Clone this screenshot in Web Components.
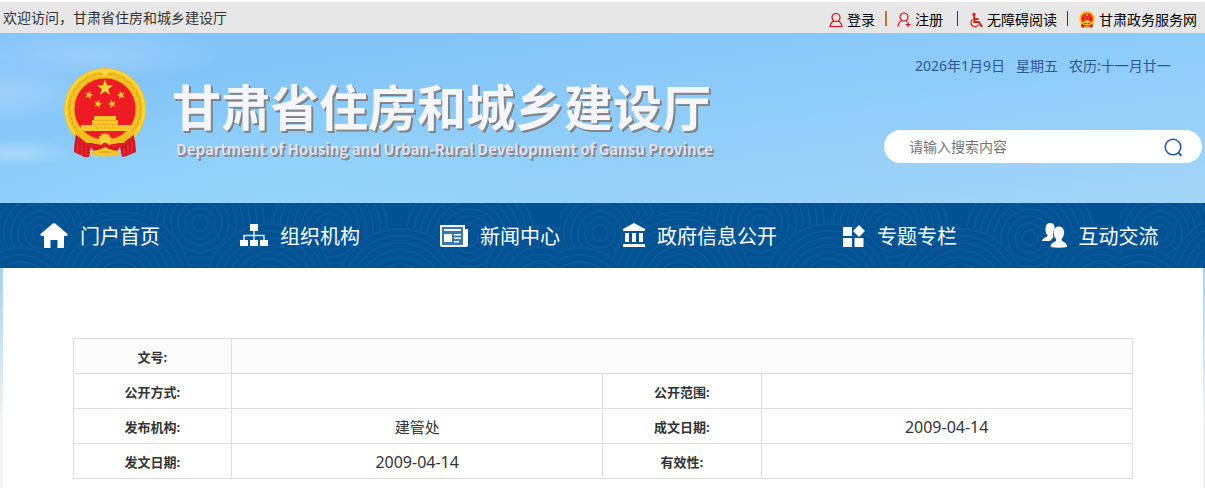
<!DOCTYPE html>
<html lang="zh-CN">
<head>
<meta charset="utf-8">
<meta name="viewport" content="width=device-width, initial-scale=1">
<title>甘肃省住房和城乡建设厅</title>
<style>
html { background: #f4f4f4; }
body {
  margin: 0;
  font-family: "Noto Sans", "Noto Sans CJK SC", sans-serif;
  font-size: 14px;
  line-height: 20px;
  color: #333;
}
</style>
</head>
<body>
<gs-page>
  <gs-topbar slot="top"></gs-topbar>
  <gs-banner slot="banner"></gs-banner>
  <gs-nav slot="nav">
    <gs-nav-item icon="home">门户首页</gs-nav-item>
    <gs-nav-item icon="org">组织机构</gs-nav-item>
    <gs-nav-item icon="news">新闻中心</gs-nav-item>
    <gs-nav-item icon="gov">政府信息公开</gs-nav-item>
    <gs-nav-item icon="topic">专题专栏</gs-nav-item>
    <gs-nav-item icon="people">互动交流</gs-nav-item>
  </gs-nav>
  <gs-doc-info></gs-doc-info>
</gs-page>

<script>
class Base extends HTMLElement {
  constructor() {
    super();
    this.attachShadow({ mode: 'open' });
  }
  connectedCallback() {
    this.shadowRoot.innerHTML = this.render();
  }
}

customElements.define('gs-page', class extends Base {
  render() {
    return `<style>
      :host { display: block; background: linear-gradient(#8ac9f8 0, #9dd2f8 200px, #a5d5f7 280px, #cfe6f6 350px, #f4f4f4 420px); border-top: 2px solid #fff; }
      main { max-width: 1200px; margin: 0 auto; background: #fff; padding: 70px 70px 9px; box-sizing: border-box; }
    </style>
    <slot name="top"></slot><slot name="banner"></slot><slot name="nav"></slot>
    <main><slot></slot></main>`;
  }
});

customElements.define('gs-emblem', class extends Base {
  render() {
    const star = '0,-10 2.4,-3.2 9.5,-3.1 3.8,1.2 5.9,8.1 0,4 -5.9,8.1 -3.8,1.2 -9.5,-3.1 -2.4,-3.2';
    const grains = (r, n) => Array.from({ length: n }, (_, i) => {
      const a = (128 + i * 284 / (n - 1)) * Math.PI / 180;
      const x = 41 + r * Math.cos(a), y = 41 + r * Math.sin(a);
      const t = a * 180 / Math.PI + (i % 2 ? 65 : 115);
      return `<ellipse cx="${x.toFixed(1)}" cy="${y.toFixed(1)}" rx="2.6" ry=".6" transform="rotate(${t.toFixed(0)} ${x.toFixed(1)} ${y.toFixed(1)})"/>`;
    }).join('');
    return `<style>
      :host { display: block; }
      svg { display: block; width: 100%; height: 100%; }
    </style>
    <svg viewBox="0 0 82 90" aria-hidden="true">
      <circle cx="41" cy="41" r="41" fill="#f5c224"/>
      <circle cx="41" cy="41" r="39" fill="none" stroke="#fbd93c" stroke-width="2"/>
      <g fill="#e0a51f">${grains(35.5, 40)}</g>
      <polygon points="${star}" transform="translate(41 5) scale(.45)" fill="#fde04a"/>
      <circle cx="41" cy="41" r="31" fill="#ed1c24" stroke="#e0a51d" stroke-width="1"/>
      <polygon points="${star}" transform="translate(41 20) scale(.84)" fill="#fdd835"/>
      <g fill="#fdc72e">
        <polygon points="${star}" transform="translate(25 27) scale(.45) rotate(15)"/>
        <polygon points="${star}" transform="translate(57 27) scale(.45) rotate(-15)"/>
        <polygon points="${star}" transform="translate(34 36) scale(.45) rotate(15)"/>
        <polygon points="${star}" transform="translate(48 36) scale(.45) rotate(-15)"/>
      </g>
      <path d="M12 65 Q10 78 10 84 L14 86 L17 87 L20 89 L25 89 L27 79 L33 88 H50 L56 79 L58 89 L63 88 L67 86 L72 84 Q72 74 69 65 L60 75 H22Z" fill="#d3161f"/>
      <path d="M14 74 L14 85 M18 77 L18 87 M22 80 L22 88 M68 74 L68 85 M64 77 L64 87 M60 80 L60 88" stroke="#ee3940" stroke-width="1"/>
      <path d="M30 48 H52 V52 H54 V57 H66 Q67 57 67 60 V63 H16 L17 57 H28 V52 H30Z" fill="#fbc82c"/>
      <path d="M29 52.500 H53 M28 56.500 H54" stroke="#e0a31f" stroke-width=".8"/>
      <path d="M32 60 H50" stroke="#e0a31f" stroke-width="1" stroke-dasharray="2 2"/>
      <path d="M13 61 Q24 72 40 72 Q58 72 69 61 L71 66 Q59 77 41 77 Q23 77 11 66Z" fill="#f5bd22"/>
      <circle cx="41" cy="72" r="6" fill="#fbd43a" stroke="#f0b722" stroke-width="2" stroke-dasharray="2 1.4"/>
      <path d="M12 67 Q24 79 37 77 Q41 72 45 77 Q58 79 70 67 L70 71 Q57 83 41 79 Q25 83 12 71Z" fill="#df1d25"/>
      <path d="M25 83 Q34 83 41 79 Q48 83 57 83 L54 87 Q41 90 28 87Z" fill="#f8c72b"/>
      <path d="M35 84 h12" stroke="#d9981c" stroke-width="1"/>
    </svg>`;
  }
});

customElements.define('gs-topbar', class extends Base {
  render() {
    return `<style>
      :host { display: flex; justify-content: space-between; align-items: center; height: 31px; background: #e7e7e7; padding: 0 8px 0 3px; }
      nav { display: flex; align-items: center; color: #000; padding-top: 4px; }
      a { display: flex; align-items: center; gap: 4px; color: inherit; text-decoration: none; white-space: nowrap; }
      i { width: 1px; height: 15px; background: #3d3158; margin: -3px 11px 0 14px; }
      i.warm { background: #b27a43; margin: -3px 10px 0 10px; width: 2px; }
      i.near { margin-left: 10px; }
      svg { width: 14px; height: 16px; fill: none; stroke: #e60012; stroke-width: 1.2; }
      gs-emblem { width: 16px; height: 17px; }
      p { margin: 0; }
    </style>
    <p>欢迎访问，甘肃省住房和城乡建设厅</p>
    <nav aria-label="用户">
      <a href="#"><svg viewBox="0 0 14 16"><circle cx="7" cy="5.500" r="4"/><path d="M5 9 Q1.500 10.500 1 14.500 H13 Q12.500 10.500 9 9"/></svg><span>登录</span></a>
      <i class="warm"></i>
      <a href="#"><svg viewBox="0 0 14 16"><circle cx="7" cy="5" r="4"/><path d="M5 8.500 Q1.500 10 1 14.500 M9 8.500 L10.500 9.500 M11 10 V15 M8.500 12.500 H13.500"/></svg><span>注册</span></a>
      <i></i>
      <a href="#"><svg viewBox="0 0 14 16"><circle cx="5" cy="2.500" r="1.700" fill="#d9230f" stroke="none"/><path d="M5.200 4 V10 H10 L12 14 L13.500 13.300 M5 7 H9.500" stroke-width="1.900" stroke="#d9230f"/><path d="M3.500 7.500 A4 4 0 1 0 9.500 12.500" stroke="#d9230f"/></svg><span>无障碍阅读</span></a>
      <i class="near"></i>
      <a href="#"><gs-emblem></gs-emblem><span>甘肃政务服务网</span></a>
    </nav>`;
  }
});

customElements.define('gs-banner', class extends Base {
  render() {
    return `<style>
      :host { display: flex; justify-content: space-between; align-items: flex-start; height: 170px; overflow: hidden;
        background:
          radial-gradient(ellipse 90px 30px at 5px 60px, #c0dcf880, transparent),
          radial-gradient(ellipse 130px 26px at 90px 22px, #b8d8f870, transparent),
          radial-gradient(ellipse 60px 14px at 15px 120px, #cfe8fa80, transparent),
          radial-gradient(ellipse 380px 110px at 300px 100%, #97d8f9b0, transparent),
          linear-gradient(172deg, #84c5f9 20%, #8fcdf9 55%, #a4d5f7 100%); }
      .brand { display: flex; align-items: flex-start; padding: 35px 0 0 64px; gap: 26px; }
      gs-emblem { width: 82px; height: 90px; flex: none; }
      hgroup { display: block; padding-top: 4px; white-space: nowrap; }
      h1, p { margin: 0; font-family: "Noto Sans CJK SC", sans-serif; font-weight: 700; }
      h1 { font-size: 49px; line-height: 66px; color: #f5f6fb; text-shadow: 1px 1px #85888c, 2px 2px #7e8082; }
      p { font-size: 15px; line-height: 22px; padding-left: 4px; color: #dfe3f3; text-shadow: 1px 1px #8a8c94, 2px 2px #85878d; }
      .side { display: flex; flex-direction: column; width: 318px; padding: 23px 3px 0 0; }
      time { color: #2f5597; padding-left: 31px; white-space: pre; }
      form { display: flex; align-items: center; height: 33px; background: #fff; border-radius: 17px; margin-top: 54px; padding: 0 19px 0 25px; }
      input { flex: 1; min-width: 0; border: 0; outline: 0; padding: 0; background: none; font: inherit; color: #333; }
      input::placeholder { color: #757575; opacity: 1; }
      button { border: 0; background: none; padding: 0; width: 20px; height: 20px; }
      svg { display: block; width: 20px; height: 20px; fill: none; stroke: #2c5aa0; stroke-width: 1.600; }
    </style>
    <div class="brand">
      <gs-emblem></gs-emblem>
      <hgroup>
        <h1>甘肃省住房和城乡建设厅</h1>
        <p lang="en">Department of Housing and Urban-Rural Development of Gansu Province</p>
      </hgroup>
    </div>
    <div class="side">
      <time datetime="2026-01-09">2026年1月9日&nbsp;&nbsp; 星期五&nbsp;&nbsp; 农历:十一月廿一</time>
      <form><input type="text" placeholder="请输入搜索内容" aria-label="请输入搜索内容"><button type="button" aria-label="搜索"><svg viewBox="0 0 20 20"><circle cx="10" cy="10" r="7.800"/><path d="M15 15.500 L18.500 18.800" stroke-width="2"/></svg></button></form>
    </div>`;
  }
});

customElements.define('gs-nav', class extends Base {
  render() {
    const rings = ([x, y, n]) => Array.from({ length: n }, (_, i) =>
      `<circle cx="${x}" cy="${y}" r="${8 + (n - 1 - i) * 7}"/>`).join('');
    const hills = [[40, 30, 9], [200, 20, 9], [330, 25, 8], [470, 35, 9], [120, 80, 10], [270, 85, 9], [400, 90, 9], [540, 80, 8], [20, 95, 7]];
    return `<style>
      :host { display: grid; height: 65px; background: #005293; overflow: hidden; }
      svg, nav { grid-area: 1 / 1; }
      svg { width: 100%; height: 65px; fill: #005293; stroke: #0a5898; stroke-width: 2; }
      nav { display: grid; grid-template-columns: repeat(6, 1fr); max-width: 1200px; z-index: 1; }
    </style>
    <svg aria-hidden="true"><defs><pattern id="waves" width="560" height="65" patternUnits="userSpaceOnUse">
      ${hills.map(rings).join('')}
    </pattern></defs><rect width="100%" height="65" fill="url(#waves)" stroke="none"/></svg>
    <nav aria-label="主导航"><slot></slot></nav>`;
  }
});

const NAV_ICONS = {
  home: [28, 26, '<path d="M14 0 L15.500 .8 L27.500 11 Q28 13 26 13 H24 V24 Q24 25 23 25 H17.500 V17 H10.500 V25 H5 Q4 25 4 24 V13 H2 Q0 13 .5 11 L12.500 .8Z"/>'],
  org: [28, 24, '<path d="M10 0 H18 V7 H10Z M0 16 H8 V22 H0Z M10 16 H18 V22 H10Z M20 16 H28 V22 H20Z"/><path d="M14 7 V16 M4 16 V11.500 H24 V16" fill="none" stroke="#dbe7f2" stroke-width="1.500"/>'],
  news: [28, 22, '<path d="M0 0 H25 V20 Q25 22 23 22 H2 Q0 22 0 20Z" fill="#f4f8fc"/><path d="M24 4 H28 V20 Q28 22 25 22 H24Z"/><path d="M2 2 H23 V20 H2Z" fill="#3876ab"/><path d="M4 4 H21 V6 H4Z M4 9 H12 V17 H4Z M14 9 H21 V10.500 H14Z M14 12.500 H21 V14 H14Z M14 16 H19 V17.500 H14Z"/>'],
  gov: [22, 26, '<path d="M11 0 L22 6 V8 H0 V6Z M2 10 H6 V19 H2Z M9 10 H13 V19 H9Z M16 10 H20 V19 H16Z M0 21 H22 V24 H0Z"/>'],
  topic: [22, 22, '<path d="M0 2 H9 V11 H0Z M0 13 H9 V22 H0Z M11.500 13 H20.500 V22 H11.500Z M16 0 L22 6 L16 12 L10 6Z"/>'],
  people: [25, 25, '<path d="M8 0 C12 0 13 3 12.500 6 Q10 10 11.500 14 L8 18 H0 Q0 16 3 14.500 Q6 13.500 5.500 12 Q3 10 3.500 5 Q4 0 8 0Z"/><path d="M16.500 3.500 C21 3.500 22.500 7 22 11 Q21.500 14 19.500 16 Q19 18 22 19 Q25 20.500 25 24 Q17 25.500 8.500 24 Q8.500 20.500 12 19 Q15 18 14 16 Q12 14 11.500 10 Q12 3.500 16.500 3.500Z"/>']
};

customElements.define('gs-nav-item', class extends Base {
  render() {
    const [w, h, body] = NAV_ICONS[this.getAttribute('icon')];
    return `<style>
      :host { display: block; }
      a { display: flex; height: 65px; align-items: center; justify-content: center; gap: 12px; color: #fff; font-size: 20px; line-height: 30px; text-decoration: none; white-space: nowrap; }
      span { padding-top: 2px; }
      svg { fill: #fff; flex: none; }
    </style>
    <a href="#"><svg width="${w}" height="${h}" viewBox="0 0 ${w} ${h}" aria-hidden="true">${body}</svg><span><slot></slot></span></a>`;
  }
});

customElements.define('gs-doc-info', class extends Base {
  render() {
    return `<style>
      :host { display: block; }
      table { width: 100%; border-collapse: collapse; table-layout: fixed; }
      col.label { width: 15%; }
      col.value { width: 35%; }
      th, td { border: 1px solid #ddd; height: 33px; padding: 1px 0 0; text-align: center; line-height: 20px; }
      th { font-size: 13px; font-weight: 700; }
      td { font-size: 16px; }
      td.name { font-size: 15px; }
      tr:first-child { background: #fbfbfb; }
    </style>
    <table>
      <colgroup><col class="label"><col class="value"><col class="label"><col class="value"></colgroup>
      <tbody>
        <tr><th scope="row">文号:</th><td colspan="3"></td></tr>
        <tr><th scope="row">公开方式:</th><td></td><th scope="row">公开范围:</th><td></td></tr>
        <tr><th scope="row">发布机构:</th><td class="name">建管处</td><th scope="row">成文日期:</th><td>2009-04-14</td></tr>
        <tr><th scope="row">发文日期:</th><td>2009-04-14</td><th scope="row">有效性:</th><td></td></tr>
      </tbody>
    </table>`;
  }
});
</script>
</body>
</html>
